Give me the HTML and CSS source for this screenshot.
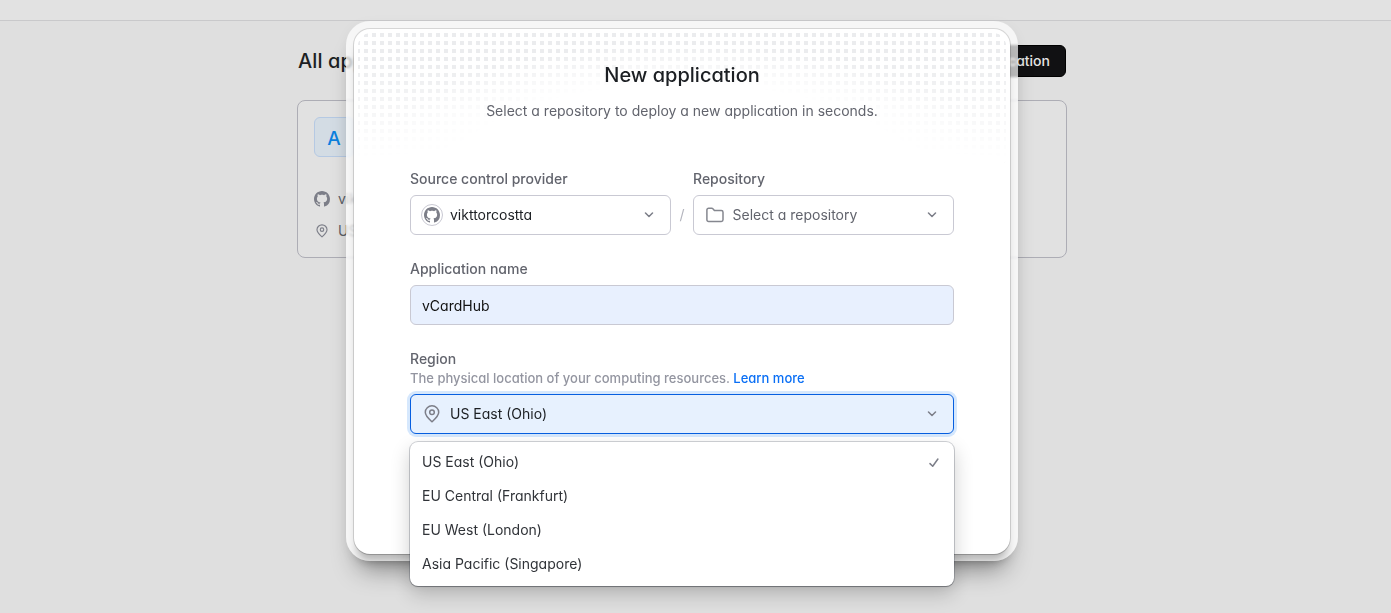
FILE: index.html
```
<!DOCTYPE html>
<html lang="en">
<head>
<meta charset="utf-8">
<title>New application</title>
<link rel="stylesheet" href="styles.css">
</head>
<body>
<svg class="sprite" width="0" height="0">
  <symbol id="github" viewBox="0 0 16 16"><path fill="currentColor" d="M8 0C3.58 0 0 3.58 0 8c0 3.54 2.29 6.53 5.47 7.59.4.07.55-.17.55-.38 0-.19-.01-.82-.01-1.49-2.01.37-2.53-.49-2.69-.94-.09-.23-.48-.94-.82-1.13-.28-.15-.68-.52-.01-.53.63-.01 1.08.58 1.23.82.72 1.21 1.87.87 2.33.66.07-.52.28-.87.51-1.07-1.78-.2-3.64-.89-3.64-3.95 0-.87.31-1.59.82-2.15-.08-.2-.36-1.02.08-2.12 0 0 .67-.21 2.2.82.64-.18 1.32-.27 2-.27s1.36.09 2 .27c1.53-1.04 2.2-.82 2.2-.82.44 1.1.16 1.92.08 2.12.51.56.82 1.27.82 2.15 0 3.07-1.87 3.75-3.65 3.95.29.25.54.73.54 1.48 0 1.07-.01 1.93-.01 2.2 0 .21.15.46.55.38A8.01 8.01 0 0 0 16 8c0-4.42-3.58-8-8-8z"/></symbol>
  <symbol id="pin" viewBox="0 0 16 18"><path fill="none" stroke="currentColor" stroke-width="1.5" stroke-linejoin="round" d="M8 16.8C5.2 14.3 1.300 11 1.300 7.300a6.700 6.500 0 0 1 13.400 0c0 3.700-3.900 7-6.700 9.500Z"/><circle cx="8" cy="7.200" r="2.300" fill="none" stroke="currentColor" stroke-width="1.500"/></symbol>
  <symbol id="chevron" viewBox="0 0 10 6"><path fill="none" stroke="currentColor" stroke-width="1.500" stroke-linecap="round" stroke-linejoin="round" d="M1.500 1 5 4.500 8.500 1"/></symbol>
</svg>
<div class="topbar"></div>
<main class="page">
  <header class="page-head"><h1>All applications</h1><span class="btn">Add application</span></header>
  <section class="app-card">
    <div class="avatar">A</div>
    <div class="meta"><svg class="gh"><use href="#github"/></svg><span>vikttorcostta</span></div>
    <div class="meta second"><svg class="pin-sm"><use href="#pin"/></svg><span>US East (Ohio)</span></div>
  </section>
</main>
<div class="overlay">
  <div class="frame">
    <div class="modal">
      <div class="dots"></div>
      <h2>New application</h2>
      <p class="lead">Select a repository to deploy a new application in seconds.</p>
      <div class="row">
        <div class="field">
          <label>Source control provider</label>
          <div class="select"><span class="ring"><svg class="gh"><use href="#github"/></svg></span><span class="value">vikttorcostta</span><svg class="chev"><use href="#chevron"/></svg></div>
        </div>
        <span class="slash">/</span>
        <div class="field">
          <label>Repository</label>
          <div class="select muted"><svg class="folder" viewBox="0 0 18 16"><path fill="none" stroke="currentColor" stroke-width="1.500" stroke-linejoin="round" d="M.9 12.700V2.900c0-1 .7-1.700 1.700-1.700h3.100c.5 0 .9.200 1.200.600l1.500 1.800h6.900c1 0 1.700.7 1.700 1.700v7.400c0 1-.7 1.700-1.700 1.700H2.600c-1 0-1.700-.7-1.700-1.700Z"/></svg><span class="value">Select a repository</span><svg class="chev"><use href="#chevron"/></svg></div>
        </div>
      </div>
      <div class="field name">
        <label>Application name</label>
        <div class="select filled">vCardHub</div>
      </div>
      <div class="field region">
        <label>Region</label>
        <p class="hint">The physical location of your computing resources. <a>Learn more</a></p>
        <div class="select active"><svg class="pin"><use href="#pin"/></svg><span class="value">US East (Ohio)</span><svg class="chev"><use href="#chevron"/></svg>
          <ul class="menu">
            <li>US East (Ohio)<svg class="check" viewBox="0 0 12 12"><path fill="none" stroke="currentColor" stroke-width="1.500" stroke-linecap="round" stroke-linejoin="round" d="M2 7.600 4.700 10.200 9.900 3"/></svg></li>
            <li>EU Central (Frankfurt)</li>
            <li>EU West (London)</li>
            <li>Asia Pacific (Singapore)</li>
          </ul>
        </div>
      </div>
    </div>
  </div>
</div>
</body>
</html>
```
FILE: styles.css
```
* { box-sizing: border-box; }
body {
  margin: 0; height: 613px; overflow: hidden; position: relative;
  background: #dfdfdf; color: #1c1f23;
  font: 400 14px/20px Inter, "Liberation Sans", sans-serif;
  font-feature-settings: "cv11"; letter-spacing: 0;
}
.sprite { position: absolute; }
h1, h2, p, ul { margin: 0; padding: 0; }
svg { display: block; flex: none; }
.topbar { height: 21px; background: #e2e2e2; border-bottom: 1px solid #c9c9cb; }
.page { width: 770px; margin-left: 297px; padding-top: 24px; }
.page-head { display: flex; justify-content: space-between; align-items: center; height: 32px; padding-right: 1px; }
h1 { font-size: 20px; line-height: 28px; font-weight: 500; padding-left: 1px; letter-spacing: .1px; }
.btn { background: #111113; color: #e4e4e4; border: 1px solid #000; border-radius: 6px; height: 32px; line-height: 30px; padding: 0 15px; font-weight: 500; }
.app-card { margin-top: 23px; height: 158px; border: 1px solid #adadb5; border-radius: 8px; padding: 16px; background: #e1e1e1; color: #5d5f66; }
.avatar { width: 40px; height: 40px; border: 1px solid #b5c9e3; border-radius: 6px; background: #d3dce4; color: #0b80df; font-size: 19px; font-weight: 500; line-height: 41px; text-align: center; }
.meta { display: flex; align-items: center; gap: 8px; height: 20px; margin-top: 32px; }
.meta.second { margin-top: 12px; }
.gh { width: 16px; height: 16px; color: #7c7e88; }
.pin-sm { width: 12px; height: 14px; margin: 0 2px; color: #7c7e88; }
.overlay { position: absolute; inset: 0; padding: 21px 0 0 346px; }
.frame {
  width: 672px; height: 540px; padding: 8px; border-radius: 24px;
  background: rgba(255,255,255,.7); backdrop-filter: blur(1px);
  box-shadow: 0 20px 26px -12px rgba(0,0,0,.42), 0 4px 14px rgba(0,0,0,.05);
}
.modal {
  width: 656px; height: 525px; border-radius: 16px; background: #fff; padding: 32px 56px; position: relative;
  box-shadow: 0 0 0 1px rgba(0,0,0,.13), 0 10px 8px -3px rgba(0,0,0,.26), 0 1px 1px rgba(0,0,0,.1);
}
.dots {
  position: absolute; left: 4px; right: 4px; top: 4px; height: 136px; border-radius: 12px;
  background:
    linear-gradient(90deg, transparent 4px, #fff 4px) 6px 0 / 8px 8px,
    linear-gradient(transparent 4px, #fff 4px) 6px 0 / 8px 8px,
    #ebecee;
  mask-image: linear-gradient(#000 20%, transparent 92%), radial-gradient(ellipse 350px 136px at 50% 100%, transparent 62%, #000 92%);
  mask-composite: intersect;
}
h2 { position: relative; text-align: center; font-size: 20px; line-height: 28px; font-weight: 500; letter-spacing: 0; }
.lead { position: relative; margin-top: 12px; text-align: center; color: #62646d; }
.row { display: flex; align-items: flex-end; margin-top: 48px; }
.row .field { width: 261px; }
.slash { width: 22px; height: 40px; line-height: 40px; text-align: center; color: #b3b4bd; }
label { display: block; font-weight: 500; color: #62646d; line-height: 20px; }
.select { display: flex; align-items: center; height: 40px; margin-top: 6px; border: 1px solid #c9c9d3; border-radius: 6px; padding: 0 16px 0 10px; background: #fff; }
.value { flex: 1; }
.ring { width: 22px; height: 22px; border: 1px solid #c9c9d3; border-radius: 50%; display: grid; place-items: center; margin-right: 7px; }
.muted { color: #62646d; padding-left: 12px; }
.folder { width: 18px; height: 16px; margin-right: 8.5px; color: #85878f; }
.chev { width: 10px; height: 6px; color: #7c7e88; }
.name { margin-top: 24px; }
.filled { background: #e8f0fe; padding-left: 11px; padding-top: 2px; color: #111; }
.region { margin-top: 24px; }
.hint { font-size: 13px; line-height: 19px; font-weight: 500; color: #9395a0; }
.hint a { color: #0a6ff5; }
.active { position: relative; background: #e7f1fe; border-color: #075fe0; box-shadow: 0 0 0 3px #d6e8fd; padding-left: 13px; }
.pin { width: 16px; height: 18px; margin-right: 10px; color: #7c7e88; }
.menu { position: absolute; left: -1px; right: -1px; top: 47px; height: 144px; padding: 3px 0; list-style: none; background: #fff; border-radius: 8px; box-shadow: 0 0 0 1px rgba(30,40,60,.2), 0 1px 1px rgba(0,0,0,.3), 0 8px 20px rgba(0,0,0,.2); }
.menu li { display: flex; justify-content: space-between; align-items: center; height: 34px; padding: 0 14px 0 12px; color: #303338; }
.check { width: 12px; height: 12px; color: #7c7e88; }
```
